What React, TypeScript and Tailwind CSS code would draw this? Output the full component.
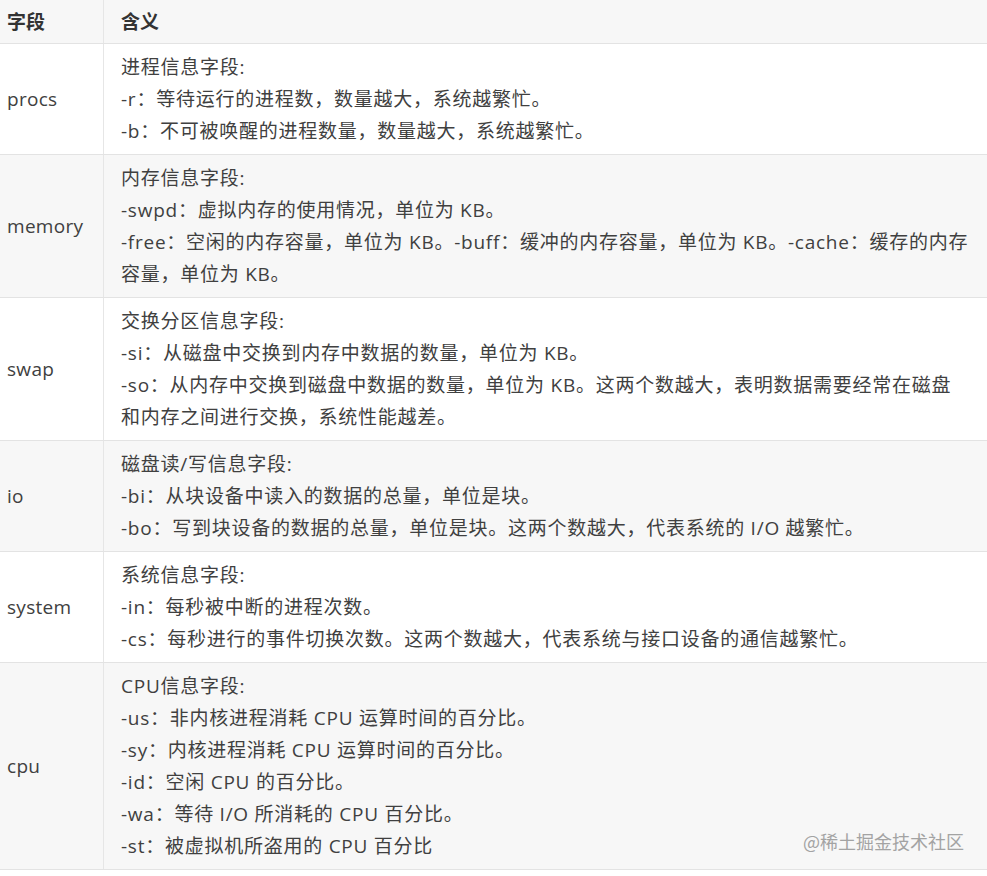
import React from "react";

type Row = { field: string; lines: string[]; gray: boolean };

const rows: Row[] = [
  {
    field: "procs",
    gray: false,
    lines: [
      "进程信息字段:",
      "-r：等待运行的进程数，数量越大，系统越繁忙。",
      "-b：不可被唤醒的进程数量，数量越大，系统越繁忙。",
    ],
  },
  {
    field: "memory",
    gray: true,
    lines: [
      "内存信息字段:",
      "-swpd：虚拟内存的使用情况，单位为 KB。",
      "-free：空闲的内存容量，单位为 KB。-buff：缓冲的内存容量，单位为 KB。-cache：缓存的内存",
      "容量，单位为 KB。",
    ],
  },
  {
    field: "swap",
    gray: false,
    lines: [
      "交换分区信息字段:",
      "-si：从磁盘中交换到内存中数据的数量，单位为 KB。",
      "-so：从内存中交换到磁盘中数据的数量，单位为 KB。这两个数越大，表明数据需要经常在磁盘",
      "和内存之间进行交换，系统性能越差。",
    ],
  },
  {
    field: "io",
    gray: true,
    lines: [
      "磁盘读/写信息字段:",
      "-bi：从块设备中读入的数据的总量，单位是块。",
      "-bo：写到块设备的数据的总量，单位是块。这两个数越大，代表系统的 I/O 越繁忙。",
    ],
  },
  {
    field: "system",
    gray: false,
    lines: [
      "系统信息字段:",
      "-in：每秒被中断的进程次数。",
      "-cs：每秒进行的事件切换次数。这两个数越大，代表系统与接口设备的通信越繁忙。",
    ],
  },
  {
    field: "cpu",
    gray: true,
    lines: [
      "CPU信息字段:",
      "-us：非内核进程消耗 CPU 运算时间的百分比。",
      "-sy：内核进程消耗 CPU 运算时间的百分比。",
      "-id：空闲 CPU 的百分比。",
      "-wa：等待 I/O 所消耗的 CPU 百分比。",
      "-st：被虚拟机所盗用的 CPU 百分比",
    ],
  },
];

const font = {
  fontFamily: '"Open Sans", "Noto Sans CJK SC", sans-serif',
};

export default function App() {
  return (
    <div className="relative w-[987px] h-[876px] bg-white overflow-hidden" style={font}>
      <div className="w-[987px] text-[19px] leading-[32px] tracking-[0.75px] text-[#404040]">
        <div className="flex h-[44px] bg-[#f7f7f7] border-b border-[#e3e3e3]">
          <div className="w-[104px] shrink-0 border-r border-[#e6e6e6] pl-[7px] flex items-center font-bold text-[#333] tracking-normal">
            字段
          </div>
          <div className="flex-1 pl-[17px] flex items-center font-bold text-[#333] tracking-normal">含义</div>
        </div>
        {rows.map((r) => (
          <div
            key={r.field}
            className={`flex border-b border-[#e3e3e3] ${r.gray ? "bg-[#f7f7f7]" : "bg-white"}`}
          >
            <div className="w-[104px] shrink-0 border-r border-[#e6e6e6] pl-[7px] flex items-center tracking-[0.3px]">
              {r.field}
            </div>
            <div className="flex-1 pl-[17px] py-[7px] whitespace-nowrap">
              {r.lines.map((l, i) => (
                <div key={i}>{l}</div>
              ))}
            </div>
          </div>
        ))}
      </div>
      <div
        className="absolute left-[803px] top-[829px] text-[18px] leading-[24px] text-[#a3a3a3]"
        style={{ fontFamily: '"Noto Sans CJK SC", sans-serif' }}
      >
        @稀土掘金技术社区
      </div>
    </div>
  );
}
